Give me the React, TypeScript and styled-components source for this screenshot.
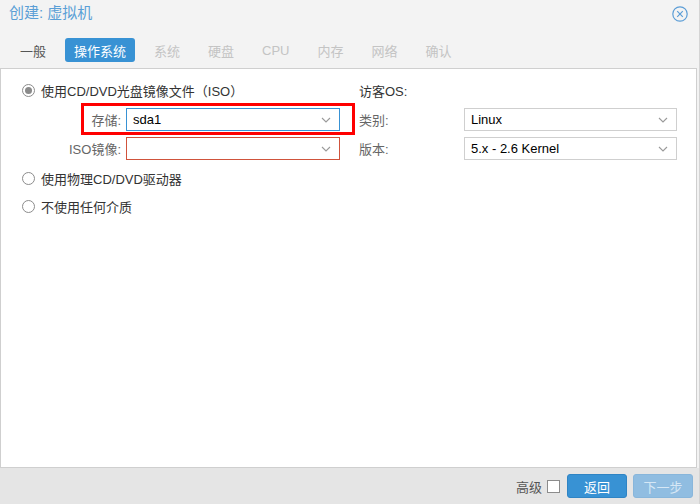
import React from "react";
import styled, { createGlobalStyle } from "styled-components";

const GlobalStyle = createGlobalStyle`
  html, body { margin: 0; padding: 0; }
  body {
    font-family: "Liberation Sans", "Noto Sans CJK SC", sans-serif;
    font-size: 13px;
    color: #333;
    background: #f3f3f3;
  }
`;

const Window = styled.div`
  width: 700px;
  height: 504px;
  box-sizing: border-box;
  background: #f3f3f3;
  border-right: 1px solid #d4d4d4;
  display: flex;
  flex-direction: column;
`;

const Header = styled.div`
  height: 28px;
  flex: none;
  display: flex;
  align-items: center;
  justify-content: space-between;
  padding: 0 11px 0 9px;
  box-sizing: border-box;
`;

const Title = styled.div`
  font-size: 15px;
  line-height: 18px;
  color: #5a9fd6;
  margin-top: -3px;
`;

const CloseBtn = styled.div`
  width: 16px;
  height: 16px;
  display: flex;
`;

const TabBar = styled.div`
  height: 40px;
  flex: none;
  display: flex;
  align-items: flex-start;
  padding: 10px 0 0 11px;
  gap: 10px;
  box-sizing: border-box;
`;

const Tab = styled.div<{ $state: "normal" | "active" | "disabled" }>`
  height: 24px;
  padding: 0 9px;
  border-radius: 3px;
  display: flex;
  align-items: center;
  font-size: 13px;
  background: ${(p) => (p.$state === "active" ? "#3892d4" : "transparent")};
  color: ${(p) =>
    p.$state === "active" ? "#ffffff" : p.$state === "disabled" ? "#c4c4c4" : "#555"};
`;

const Panel = styled.div`
  flex: 1;
  position: relative;
  background: #fff;
  border: 1px solid #cfcfcf;
  margin-right: 2px;
  padding: 9px 0 0 21px;
  display: grid;
  grid-template-columns: 318px 318px;
  column-gap: 19px;
  align-content: start;
`;

const Column = styled.div`
  display: flex;
  flex-direction: column;
`;

const Row = styled.div<{ $mt?: number; $h?: number }>`
  display: flex;
  align-items: center;
  height: ${(p) => p.$h ?? 23}px;
  margin-top: ${(p) => p.$mt ?? 0}px;
`;

const RadioCircle = styled.span<{ $checked?: boolean }>`
  width: 13px;
  height: 13px;
  box-sizing: border-box;
  border: 1px solid #8c8c8c;
  border-radius: 50%;
  display: inline-flex;
  align-items: center;
  justify-content: center;
  margin: 0 6px 0 0;
  background: #fff;
  &::after {
    content: "";
    display: ${(p) => (p.$checked ? "block" : "none")};
    width: 7px;
    height: 7px;
    border-radius: 50%;
    background: #8a8a8a;
  }
`;

const RadioText = styled.span`
  color: #333;
  font-size: 13px;
`;

const FieldLabel = styled.label<{ $align: "left" | "right" }>`
  width: ${(p) => (p.$align === "right" ? 99 : 105)}px;
  padding-right: ${(p) => (p.$align === "right" ? 5 : 0)}px;
  flex: none;
  text-align: ${(p) => p.$align};
  color: #666;
  font-size: 13px;
`;

const Plain = styled.span`
  color: #333;
  font-size: 13px;
`;

const toneColor = { normal: "#cfcfcf", focus: "#3892d4", error: "#d0533c" };

const SelectBox = styled.div<{ $tone: "normal" | "focus" | "error" }>`
  flex: 1;
  height: 23px;
  box-sizing: border-box;
  border-width: 1px;
  border-style: solid;
  border-color: ${(p) => toneColor[p.$tone]};
  background: #fff;
  display: flex;
  align-items: center;
  padding: 0 8px 0 6px;
  color: #000;
  font-size: 13px;
`;

const SelectValue = styled.span`
  flex: 1;
`;

const Highlight = styled.div`
  position: absolute;
  left: 80px;
  top: 34px;
  width: 274px;
  height: 32px;
  box-sizing: border-box;
  border: 3px solid #ff0000;
  pointer-events: none;
`;

const Footer = styled.div`
  height: 36px;
  flex: none;
  background: #e5e5e5;
  display: flex;
  align-items: center;
  justify-content: flex-end;
  padding: 0 6px 0 0;
  box-sizing: border-box;
`;

const FooterLabel = styled.span`
  color: #555;
  font-size: 13px;
  margin-right: 5px;
`;

const CheckBox = styled.span`
  width: 13px;
  height: 13px;
  box-sizing: border-box;
  border: 1px solid #8c8c8c;
  background: #fff;
  margin-right: 7px;
`;

const Button = styled.div<{ $disabled?: boolean }>`
  width: 60px;
  height: 24px;
  box-sizing: border-box;
  border-radius: 3px;
  display: flex;
  align-items: center;
  justify-content: center;
  font-size: 13px;
  background: ${(p) => (p.$disabled ? "#90bde1" : "#3892d4")};
  border: 1px solid ${(p) => (p.$disabled ? "#88b6db" : "#2f84c4")};
  color: ${(p) => (p.$disabled ? "#d6e7f5" : "#fff")};
  & + & {
    margin-left: 6px;
  }
`;

const Chevron = () => (
  <svg width="10" height="6" viewBox="0 0 10 6">
    <path d="M1 1 L5 5 L9 1" fill="none" stroke="#9a9a9a" strokeWidth="1.1" />
  </svg>
);

const Select: React.FC<{ value?: string; tone?: "normal" | "focus" | "error" }> = ({
  value,
  tone = "normal",
}) => (
  <SelectBox $tone={tone}>
    <SelectValue>{value}</SelectValue>
    <Chevron />
  </SelectBox>
);

const tabs: { label: string; state: "normal" | "active" | "disabled" }[] = [
  { label: "一般", state: "normal" },
  { label: "操作系统", state: "active" },
  { label: "系统", state: "disabled" },
  { label: "硬盘", state: "disabled" },
  { label: "CPU", state: "disabled" },
  { label: "内存", state: "disabled" },
  { label: "网络", state: "disabled" },
  { label: "确认", state: "disabled" },
];

export default function App() {
  return (
    <>
      <GlobalStyle />
      <Window>
        <Header>
          <Title>创建: 虚拟机</Title>
          <CloseBtn>
            <svg width="16" height="16" viewBox="0 0 16 16">
              <circle cx="8" cy="8" r="7.2" fill="none" stroke="#5b9dd6" strokeWidth="1.2" />
              <path d="M5.2 5.2 L10.8 10.8 M10.8 5.2 L5.2 10.8" stroke="#5b9dd6" strokeWidth="1.2" />
            </svg>
          </CloseBtn>
        </Header>
        <TabBar>
          {tabs.map((t) => (
            <Tab key={t.label} $state={t.state}>
              {t.label}
            </Tab>
          ))}
        </TabBar>
        <Panel>
          <Column>
            <Row $h={24}>
              <RadioCircle $checked />
              <RadioText>使用CD/DVD光盘镜像文件（ISO）</RadioText>
            </Row>
            <Row $mt={6}>
              <FieldLabel $align="right">存储:</FieldLabel>
              <Select value="sda1" tone="focus" />
            </Row>
            <Row $mt={6}>
              <FieldLabel $align="right">ISO镜像:</FieldLabel>
              <Select tone="error" />
            </Row>
            <Row $h={24} $mt={6}>
              <RadioCircle />
              <RadioText>使用物理CD/DVD驱动器</RadioText>
            </Row>
            <Row $h={24} $mt={4}>
              <RadioCircle />
              <RadioText>不使用任何介质</RadioText>
            </Row>
          </Column>
          <Column>
            <Row $h={24}>
              <Plain>访客OS:</Plain>
            </Row>
            <Row $mt={6}>
              <FieldLabel $align="left">类别:</FieldLabel>
              <Select value="Linux" />
            </Row>
            <Row $mt={6}>
              <FieldLabel $align="left">版本:</FieldLabel>
              <Select value="5.x - 2.6 Kernel" />
            </Row>
          </Column>
          <Highlight />
        </Panel>
        <Footer>
          <FooterLabel>高级</FooterLabel>
          <CheckBox />
          <Button>返回</Button>
          <Button $disabled>下一步</Button>
        </Footer>
      </Window>
    </>
  );
}
